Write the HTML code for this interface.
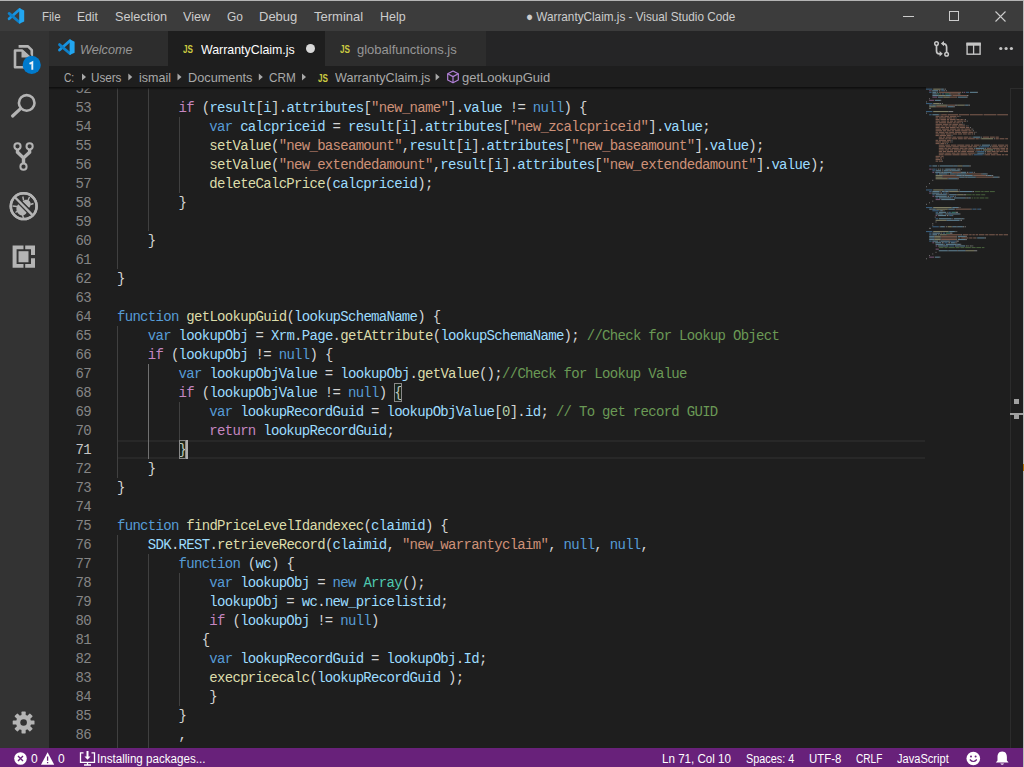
<!DOCTYPE html>
<html><head><meta charset="utf-8">
<style>
*{box-sizing:border-box}
html,body{margin:0;padding:0;width:1024px;height:767px;overflow:hidden;background:#1e1e1e;font-family:"Liberation Sans",sans-serif}
.a{position:absolute}
#topb{left:0;top:0;width:1024px;height:1px;background:#b4b4b4}
#rb{left:1023px;top:0;width:1px;height:767px;background:#bcbcbc}
#title{left:0;top:1px;width:1023px;height:30px;background:#3c3c3c}
.menu{top:2px;height:30px;line-height:30px;font-size:13px;color:#cccccc;white-space:pre}
#act{left:0;top:31px;width:49px;height:717px;background:#333333}
#tabs{left:49px;top:31px;width:974px;height:35px;background:#252526}
.tab{top:31px;height:35px;background:#2d2d2d}
.tabt{top:32px;height:35px;line-height:35px;font-size:13px;white-space:pre}
#crumb{left:49px;top:66px;width:974px;height:22px;background:#1e1e1e}
.cr{top:67px;height:22px;line-height:22px;font-size:13px;color:#a9a9a9;white-space:pre}
#shadow{left:49px;top:87px;width:877px;height:3px;background:linear-gradient(#0c0c0c,rgba(0,0,0,0))}
.ln{position:absolute;left:0px;width:42px;text-align:right;font-family:"Liberation Mono",monospace;font-size:14px;letter-spacing:-0.703px;line-height:19px;height:19px;color:#858585}
.ln.act{color:#c6c6c6}
.ig{position:absolute;width:1px;background:#404040}
.ig.ia{background:#707070}
.cl{position:absolute;white-space:pre;font-family:"Liberation Mono",monospace;font-size:14px;letter-spacing:-0.703px;line-height:19px;height:19px;color:#d4d4d4}
.k{color:#c586c0}.s{color:#569cd6}.v{color:#9cdcfe}.f{color:#dcdcaa}.t{color:#ce9178}.c{color:#6a9955}.p{color:#d4d4d4}.y{color:#4ec9b0}.n{color:#b5cea8}.b{color:#d4d4d4}
#status{left:0;top:748px;width:1023px;height:19px;background:#68217a}
.js{color:#cbcb41;font-weight:bold;font-size:11px;transform:scaleX(0.74);transform-origin:0 0}
.st{top:748px;height:19px;line-height:22px;font-size:12px;color:#ffffff;white-space:pre}
</style></head><body>
<div class="a" id="title"></div>
<div class="a" id="topb"></div>
<!-- logo -->
<svg class="a" style="left:5px;top:5px" width="22" height="22" viewBox="5 5 22 22">
<path d="M9.1 18.8 L19.5 9.5" stroke="#1793e0" stroke-width="2.8" stroke-linecap="round"/>
<path d="M9.1 13.4 L19.5 22.3" stroke="#0e80c9" stroke-width="2.8" stroke-linecap="round"/>
<path d="M19.2 8.1 L24.2 10.5 V21.5 L19.2 23.7 Z" fill="#22a6f0"/>
</svg>
<div class="a menu" style="left:42px;transform:scaleX(0.886);transform-origin:0 0">File</div>
<div class="a menu" style="left:77px;transform:scaleX(0.935);transform-origin:0 0">Edit</div>
<div class="a menu" style="left:115px;transform:scaleX(0.975);transform-origin:0 0">Selection</div>
<div class="a menu" style="left:183px;transform:scaleX(0.975);transform-origin:0 0">View</div>
<div class="a menu" style="left:227px;transform:scaleX(0.918);transform-origin:0 0">Go</div>
<div class="a menu" style="left:259px">Debug</div>
<div class="a menu" style="left:314px">Terminal</div>
<div class="a menu" style="left:380px;transform:scaleX(0.956);transform-origin:0 0">Help</div>
<div class="a menu" style="left:526px;transform:scaleX(0.903);transform-origin:0 0">● WarrantyClaim.js - Visual Studio Code</div>
<!-- window controls -->
<div class="a" style="left:903px;top:16px;width:11px;height:1px;background:#cccccc"></div>
<div class="a" style="left:949px;top:11px;width:10px;height:10px;border:1px solid #cccccc"></div>
<svg class="a" style="left:995px;top:11px" width="11" height="11" viewBox="0 0 11 11"><path d="M0.5 0.5 L10.5 10.5 M10.5 0.5 L0.5 10.5" stroke="#cccccc" stroke-width="1.1"/></svg>

<div class="a" id="act"></div>
<div class="a" id="tabs"></div>
<div class="a tab" style="left:49px;width:119px"></div>
<div class="a tab" style="left:168px;width:157px;background:#1e1e1e"></div>
<div class="a tab" style="left:325px;width:161px"></div>
<div class="a" id="crumb"></div>

<!-- activity icons -->
<svg class="a" style="left:0;top:31px" width="49" height="717" viewBox="0 31 49 717">
 <g fill="none" stroke="#b4b4b4" stroke-width="2.6" stroke-linejoin="round">
  <path d="M18.6 46.4 H28 L31.8 50.2 V58"/>
  <path d="M15 50.5 H22.6 L29.3 56.6 V67.2 H15 Z"/>
 </g>
 <path d="M21.5 50 L29.8 57.5 H21.5 Z" fill="#b4b4b4"/>
 <path d="M22.5 48.2 L31 56" stroke="#333333" stroke-width="1.2"/>
 <circle cx="31.7" cy="64.9" r="9.1" fill="#007acc"/>
 <path d="M29.5 63.9 L32.3 62.3 V69.8" fill="none" stroke="#e8f2fa" stroke-width="1.9" stroke-linejoin="miter"/>
 <!-- search -->
 <circle cx="26.7" cy="102.9" r="7.8" fill="none" stroke="#b4b4b4" stroke-width="2.6"/>
 <path d="M12.6 116 L20.6 108.6" stroke="#b4b4b4" stroke-width="3.2" stroke-linecap="round"/>
 <!-- scm -->
 <g fill="none" stroke="#b4b4b4" stroke-width="2">
  <circle cx="17.5" cy="146.3" r="3.1"/>
  <circle cx="29.6" cy="146.3" r="3.1"/>
  <circle cx="23.5" cy="166.7" r="3.1"/>
 </g>
 <path d="M17.5 149.3 V152.2 L23.5 158 L29.6 152.2 V149.3 M23.5 157 V163.6" fill="none" stroke="#b4b4b4" stroke-width="3.4"/>
 <!-- debug -->
 <circle cx="23.7" cy="206.2" r="12.9" fill="none" stroke="#b4b4b4" stroke-width="2.5"/>
 <g fill="#b4b4b4">
  <path d="M21.5 202.5 C17.5 203.5 16 207 16.5 210 C17 213.5 20 215.5 23 215.5 C25.5 215 27 213 27 211 Z"/>
  <path d="M22.5 201.5 L29 208 C31 206 31.5 203 29.5 201 C27.5 199 24.5 199.5 22.5 201.5 Z"/>
 </g>
 <g stroke="#b4b4b4" stroke-width="1.4" fill="none">
  <path d="M22.8 196.5 L23.6 200.5 M29.5 197 L28 200.5 M33.5 203.5 L30.5 204.5 M12.5 206 L17 206.5 M15.5 212.5 L17.5 211 M22.5 215 L23.5 218"/>
 </g>
 <path d="M14.2 196.5 L33.2 215.8" stroke="#333333" stroke-width="5"/>
 <path d="M14.2 196.5 L33.2 215.8" stroke="#b4b4b4" stroke-width="2.4"/>
 <circle cx="23.7" cy="206.2" r="12.9" fill="none" stroke="#b4b4b4" stroke-width="2.5"/>
 <!-- extensions -->
 <path d="M12.6 245.4 H23.5 V249.3 H16.6 V263.9 H23.5 V267.8 H12.6 Z M25.2 245.4 H35 V255 H31 V249.3 H25.2 Z M25.2 263.9 H31 V258.3 H35 V267.8 H25.2 Z" fill="#b4b4b4"/>
 <rect x="17.9" y="250.6" width="11.2" height="12.3" fill="#b4b4b4" stroke="#333333" stroke-width="1.2"/>
 <!-- gear -->
 <g transform="translate(23.6 722.5)" fill="#b4b4b4">
  <circle r="7.7"/>
  <rect x="-2.1" y="-10.9" width="4.2" height="4.5" rx="0.6" transform="rotate(0)"/><rect x="-2.1" y="-10.9" width="4.2" height="4.5" rx="0.6" transform="rotate(45)"/><rect x="-2.1" y="-10.9" width="4.2" height="4.5" rx="0.6" transform="rotate(90)"/><rect x="-2.1" y="-10.9" width="4.2" height="4.5" rx="0.6" transform="rotate(135)"/><rect x="-2.1" y="-10.9" width="4.2" height="4.5" rx="0.6" transform="rotate(180)"/><rect x="-2.1" y="-10.9" width="4.2" height="4.5" rx="0.6" transform="rotate(225)"/><rect x="-2.1" y="-10.9" width="4.2" height="4.5" rx="0.6" transform="rotate(270)"/><rect x="-2.1" y="-10.9" width="4.2" height="4.5" rx="0.6" transform="rotate(315)"/>
  <circle r="3.3" fill="#333333"/>
 </g>
</svg>
<!-- tabs content -->
<svg class="a" style="left:55px;top:36px" width="22" height="22" viewBox="4.6 4.8 22 22">
<path d="M9.1 18.8 L19.5 9.5" stroke="#1793e0" stroke-width="2.8" stroke-linecap="round"/>
<path d="M9.1 13.4 L19.5 22.3" stroke="#0e80c9" stroke-width="2.8" stroke-linecap="round"/>
<path d="M19.2 8.1 L24.2 10.5 V21.5 L19.2 23.7 Z" fill="#22a6f0"/>
</svg>
<div class="a tabt" style="left:80px;color:#969696;font-style:italic;transform:scaleX(0.975);transform-origin:0 0">Welcome</div>
<div class="a tabt js" style="left:183px">JS</div>
<div class="a tabt" style="left:201px;color:#ffffff;transform:scaleX(0.952);transform-origin:0 0">WarrantyClaim.js</div>
<div class="a" style="left:306px;top:44px;width:9px;height:9px;border-radius:50%;background:#d8d8d8"></div>
<div class="a tabt js" style="left:340px">JS</div>
<div class="a tabt" style="left:357px;color:#969696">globalfunctions.js</div>
<!-- tab actions -->
<svg class="a" style="left:930px;top:38px" width="90" height="22" viewBox="930 38 90 22">
 <g fill="none" stroke="#c5c5c5" stroke-width="1.5">
  <circle cx="936.5" cy="43.6" r="1.8"/>
  <circle cx="946.6" cy="54.2" r="1.8"/>
  <path d="M936.5 45.4 V51 Q936.5 53.8 939.3 53.8 H940.5" stroke-width="1.7"/>
  <path d="M942.5 43.6 Q946.6 43.6 946.6 47 V52.4" stroke-width="1.7"/>
 </g>
 <path d="M939.6 51.1 L942.8 53.8 L939.6 56.5 Z M944 40.9 L940.8 43.6 L944 46.3 Z" fill="#c5c5c5"/>
 <rect x="967.1" y="43.4" width="13" height="10.8" fill="none" stroke="#c5c5c5" stroke-width="1.4"/>
 <rect x="966.4" y="42.7" width="14.4" height="3" fill="#c5c5c5"/>
 <path d="M973.6 44 V54.3" stroke="#c5c5c5" stroke-width="1.3"/>
 <circle cx="1000.8" cy="48.5" r="1.6" fill="#c5c5c5"/>
 <circle cx="1006.1" cy="48.5" r="1.6" fill="#c5c5c5"/>
 <circle cx="1011.4" cy="48.5" r="1.6" fill="#c5c5c5"/>
</svg>
<!-- breadcrumbs -->
<div class="a cr" style="left:64px;transform:scaleX(0.785);transform-origin:0 0">C:</div>
<div class="a cr" style="left:91px;transform:scaleX(0.897);transform-origin:0 0">Users</div>
<div class="a cr" style="left:139px;transform:scaleX(0.961);transform-origin:0 0">ismail</div>
<div class="a cr" style="left:188px;transform:scaleX(0.979);transform-origin:0 0">Documents</div>
<div class="a cr" style="left:269px;transform:scaleX(0.903);transform-origin:0 0">CRM</div>
<div class="a cr js" style="left:318px">JS</div>
<div class="a cr" style="left:335px;transform:scaleX(0.968);transform-origin:0 0">WarrantyClaim.js</div>
<div class="a cr" style="left:462px">getLookupGuid</div>
<svg class="a" style="left:49px;top:66px" width="420" height="22" viewBox="49 66 420 22">
 <g fill="#a9a9a9">
  <path d="M82 73.5 L86 77 L82 80.5 Z"/>
  <path d="M128.3 73.5 L132.3 77 L128.3 80.5 Z"/>
  <path d="M177.5 73.5 L181.5 77 L177.5 80.5 Z"/>
  <path d="M258.8 73.5 L262.8 77 L258.8 80.5 Z"/>
  <path d="M302 73.5 L306 77 L302 80.5 Z"/>
  <path d="M435.6 73.5 L439.6 77 L435.6 80.5 Z"/>
 </g>
 <g fill="none" stroke="#b180d7" stroke-width="1.2" stroke-linejoin="round">
  <path d="M453 71 L458.3 73.8 V80 L453 82.8 L447.7 80 V73.8 Z"/>
  <path d="M447.7 73.8 L453 76.6 L458.3 73.8 M453 76.6 V82.8"/>
 </g>
</svg>

<div class="a" id="editor" style="left:49px;top:88px;width:974px;height:660px;overflow:hidden">
<div style="position:absolute;left:68px;top:352px;width:808px;height:19px;border-top:2px solid #282828;border-bottom:2px solid #282828"></div>
<div class="ln" style="top:-8px">52</div>
<div class="ln" style="top:11px">53</div>
<div class="ln" style="top:30px">54</div>
<div class="ln" style="top:49px">55</div>
<div class="ln" style="top:68px">56</div>
<div class="ln" style="top:87px">57</div>
<div class="ln" style="top:106px">58</div>
<div class="ln" style="top:125px">59</div>
<div class="ln" style="top:144px">60</div>
<div class="ln" style="top:163px">61</div>
<div class="ln" style="top:182px">62</div>
<div class="ln" style="top:201px">63</div>
<div class="ln" style="top:220px">64</div>
<div class="ln" style="top:239px">65</div>
<div class="ln" style="top:258px">66</div>
<div class="ln" style="top:277px">67</div>
<div class="ln" style="top:296px">68</div>
<div class="ln" style="top:315px">69</div>
<div class="ln" style="top:334px">70</div>
<div class="ln act" style="top:353px">71</div>
<div class="ln" style="top:372px">72</div>
<div class="ln" style="top:391px">73</div>
<div class="ln" style="top:410px">74</div>
<div class="ln" style="top:429px">75</div>
<div class="ln" style="top:448px">76</div>
<div class="ln" style="top:467px">77</div>
<div class="ln" style="top:486px">78</div>
<div class="ln" style="top:505px">79</div>
<div class="ln" style="top:524px">80</div>
<div class="ln" style="top:543px">81</div>
<div class="ln" style="top:562px">82</div>
<div class="ln" style="top:581px">83</div>
<div class="ln" style="top:600px">84</div>
<div class="ln" style="top:619px">85</div>
<div class="ln" style="top:638px">86</div>
<div class="ig" style="left:68.00px;top:-9px;height:190px"></div>
<div class="ig" style="left:98.79px;top:-9px;height:152px"></div>
<div class="ig" style="left:129.58px;top:29px;height:76px"></div>
<div class="ig" style="left:68.00px;top:238px;height:152px"></div>
<div class="ig ia" style="left:98.79px;top:276px;height:95px"></div>
<div class="ig" style="left:129.58px;top:314px;height:38px"></div>
<div class="ig" style="left:68.00px;top:447px;height:228px"></div>
<div class="ig" style="left:98.79px;top:466px;height:209px"></div>
<div class="ig" style="left:129.58px;top:485px;height:133px"></div>
<div class="cl" style="top:11px;left:129.58px"><span class="k">if</span><span class="p"> (</span><span class="v">result</span><span class="p">[</span><span class="v">i</span><span class="p">].</span><span class="v">attributes</span><span class="p">[</span><span class="t">&quot;new_name&quot;</span><span class="p">].</span><span class="v">value</span><span class="p"> != </span><span class="s">null</span><span class="p">) {</span></div>
<div class="cl" style="top:30px;left:160.36px"><span class="s">var</span><span class="p"> </span><span class="v">calcpriceid</span><span class="p"> = </span><span class="v">result</span><span class="p">[</span><span class="v">i</span><span class="p">].</span><span class="v">attributes</span><span class="p">[</span><span class="t">&quot;new_zcalcpriceid&quot;</span><span class="p">].</span><span class="v">value</span><span class="p">;</span></div>
<div class="cl" style="top:49px;left:160.36px"><span class="f">setValue</span><span class="p">(</span><span class="t">&quot;new_baseamount&quot;</span><span class="p">,</span><span class="v">result</span><span class="p">[</span><span class="v">i</span><span class="p">].</span><span class="v">attributes</span><span class="p">[</span><span class="t">&quot;new_baseamount&quot;</span><span class="p">].</span><span class="v">value</span><span class="p">);</span></div>
<div class="cl" style="top:68px;left:160.36px"><span class="f">setValue</span><span class="p">(</span><span class="t">&quot;new_extendedamount&quot;</span><span class="p">,</span><span class="v">result</span><span class="p">[</span><span class="v">i</span><span class="p">].</span><span class="v">attributes</span><span class="p">[</span><span class="t">&quot;new_extendedamount&quot;</span><span class="p">].</span><span class="v">value</span><span class="p">);</span></div>
<div class="cl" style="top:87px;left:160.36px"><span class="f">deleteCalcPrice</span><span class="p">(</span><span class="v">calcpriceid</span><span class="p">);</span></div>
<div class="cl" style="top:106px;left:129.58px"><span class="p">}</span></div>
<div class="cl" style="top:144px;left:98.79px"><span class="p">}</span></div>
<div class="cl" style="top:182px;left:68.00px"><span class="p">}</span></div>
<div class="cl" style="top:220px;left:68.00px"><span class="s">function</span><span class="p"> </span><span class="f">getLookupGuid</span><span class="p">(</span><span class="v">lookupSchemaName</span><span class="p">) {</span></div>
<div class="cl" style="top:239px;left:98.79px"><span class="s">var</span><span class="p"> </span><span class="v">lookupObj</span><span class="p"> = </span><span class="v">Xrm</span><span class="p">.</span><span class="v">Page</span><span class="p">.</span><span class="f">getAttribute</span><span class="p">(</span><span class="v">lookupSchemaName</span><span class="p">); </span><span class="c">//Check for Lookup Object</span></div>
<div class="cl" style="top:258px;left:98.79px"><span class="k">if</span><span class="p"> (</span><span class="v">lookupObj</span><span class="p"> != </span><span class="s">null</span><span class="p">) {</span></div>
<div class="cl" style="top:277px;left:129.58px"><span class="s">var</span><span class="p"> </span><span class="v">lookupObjValue</span><span class="p"> = </span><span class="v">lookupObj</span><span class="p">.</span><span class="f">getValue</span><span class="p">();</span><span class="c">//Check for Lookup Value</span></div>
<div class="cl" style="top:296px;left:129.58px"><span class="k">if</span><span class="p"> (</span><span class="v">lookupObjValue</span><span class="p"> != </span><span class="s">null</span><span class="p">) </span><span class="b">{</span></div>
<div class="cl" style="top:315px;left:160.36px"><span class="s">var</span><span class="p"> </span><span class="v">lookupRecordGuid</span><span class="p"> = </span><span class="v">lookupObjValue</span><span class="p">[</span><span class="n">0</span><span class="p">].</span><span class="v">id</span><span class="p">; </span><span class="c">// To get record GUID</span></div>
<div class="cl" style="top:334px;left:160.36px"><span class="k">return</span><span class="p"> </span><span class="v">lookupRecordGuid</span><span class="p">;</span></div>
<div class="cl" style="top:353px;left:129.58px"><span class="b">}</span></div>
<div class="cl" style="top:372px;left:98.79px"><span class="p">}</span></div>
<div class="cl" style="top:391px;left:68.00px"><span class="p">}</span></div>
<div class="cl" style="top:429px;left:68.00px"><span class="s">function</span><span class="p"> </span><span class="f">findPriceLevelIdandexec</span><span class="p">(</span><span class="v">claimid</span><span class="p">) {</span></div>
<div class="cl" style="top:448px;left:98.79px"><span class="v">SDK</span><span class="p">.</span><span class="v">REST</span><span class="p">.</span><span class="f">retrieveRecord</span><span class="p">(</span><span class="v">claimid</span><span class="p">, </span><span class="t">&quot;new_warrantyclaim&quot;</span><span class="p">, </span><span class="s">null</span><span class="p">, </span><span class="s">null</span><span class="p">,</span></div>
<div class="cl" style="top:467px;left:129.58px"><span class="s">function</span><span class="p"> (</span><span class="v">wc</span><span class="p">) {</span></div>
<div class="cl" style="top:486px;left:160.36px"><span class="s">var</span><span class="p"> </span><span class="v">lookupObj</span><span class="p"> = </span><span class="s">new</span><span class="p"> </span><span class="y">Array</span><span class="p">();</span></div>
<div class="cl" style="top:505px;left:160.36px"><span class="v">lookupObj</span><span class="p"> = </span><span class="v">wc</span><span class="p">.</span><span class="v">new_pricelistid</span><span class="p">;</span></div>
<div class="cl" style="top:524px;left:160.36px"><span class="k">if</span><span class="p"> (</span><span class="v">lookupObj</span><span class="p"> != </span><span class="s">null</span><span class="p">)</span></div>
<div class="cl" style="top:543px;left:152.67px"><span class="p">{</span></div>
<div class="cl" style="top:562px;left:160.36px"><span class="s">var</span><span class="p"> </span><span class="v">lookupRecordGuid</span><span class="p"> = </span><span class="v">lookupObj</span><span class="p">.</span><span class="v">Id</span><span class="p">;</span></div>
<div class="cl" style="top:581px;left:160.36px"><span class="f">execpricecalc</span><span class="p">(</span><span class="v">lookupRecordGuid</span><span class="p"> );</span></div>
<div class="cl" style="top:600px;left:160.36px"><span class="p">}</span></div>
<div class="cl" style="top:619px;left:129.58px"><span class="p">}</span></div>
<div class="cl" style="top:638px;left:129.58px"><span class="p">,</span></div>
<div style="position:absolute;left:345.09px;top:295px;width:7.70px;height:19px;border:1px solid #888888;background:rgba(0,100,0,0.1)"></div>
<div style="position:absolute;left:129.58px;top:352px;width:7.70px;height:19px;border:1px solid #888888;background:rgba(0,100,0,0.1)"></div>
<div style="position:absolute;left:137.27px;top:352px;width:2px;height:19px;background:#aeafad"></div>
</div>
<svg class="a" style="left:922px;top:88px" width="88" height="180" viewBox="922 88 88 180"><g opacity="0.5"><rect x="926.0" y="88.6" width="6.4" height="1.1" fill="#569cd6"/><rect x="933.2" y="88.6" width="7.2" height="1.1" fill="#dcdcaa"/><rect x="940.4" y="88.6" width="0.8" height="1.1" fill="#d4d4d4"/><rect x="941.2" y="88.6" width="2.4" height="1.1" fill="#9cdcfe"/><rect x="943.6" y="88.6" width="0.8" height="1.1" fill="#d4d4d4"/><rect x="945.2" y="88.6" width="0.8" height="1.1" fill="#d4d4d4"/><rect x="929.2" y="90.2" width="1.6" height="1.1" fill="#c586c0"/><rect x="931.6" y="90.2" width="0.8" height="1.1" fill="#d4d4d4"/><rect x="932.4" y="90.2" width="5.6" height="1.1" fill="#9cdcfe"/><rect x="938.8" y="90.2" width="1.6" height="1.1" fill="#d4d4d4"/><rect x="941.2" y="90.2" width="3.2" height="1.1" fill="#569cd6"/><rect x="944.4" y="90.2" width="0.8" height="1.1" fill="#d4d4d4"/><rect x="946.0" y="90.2" width="0.8" height="1.1" fill="#d4d4d4"/><rect x="929.2" y="91.8" width="2.4" height="1.1" fill="#569cd6"/><rect x="932.4" y="91.8" width="4.0" height="1.1" fill="#9cdcfe"/><rect x="937.2" y="91.8" width="0.8" height="1.1" fill="#d4d4d4"/><rect x="938.8" y="91.8" width="22.4" height="1.1" fill="#ce9178"/><rect x="962.0" y="91.8" width="0.8" height="1.1" fill="#d4d4d4"/><rect x="963.6" y="91.8" width="1.6" height="1.1" fill="#c586c0"/><rect x="966.0" y="91.8" width="3.2" height="1.1" fill="#569cd6"/><rect x="970.0" y="91.8" width="7.2" height="1.1" fill="#9cdcfe"/><rect x="977.2" y="91.8" width="0.8" height="1.1" fill="#d4d4d4"/><rect x="932.4" y="93.4" width="4.0" height="1.1" fill="#9cdcfe"/><rect x="936.4" y="93.4" width="0.8" height="1.1" fill="#d4d4d4"/><rect x="937.2" y="93.4" width="2.4" height="1.1" fill="#4ec9b0"/><rect x="940.4" y="93.4" width="0.8" height="1.1" fill="#d4d4d4"/><rect x="942.0" y="93.4" width="2.4" height="1.1" fill="#569cd6"/><rect x="945.2" y="93.4" width="4.0" height="1.1" fill="#4ec9b0"/><rect x="949.2" y="93.4" width="1.6" height="1.1" fill="#d4d4d4"/><rect x="950.8" y="93.4" width="7.2" height="1.1" fill="#ce9178"/><rect x="958.0" y="93.4" width="2.4" height="1.1" fill="#d4d4d4"/><rect x="932.4" y="95.0" width="5.6" height="1.1" fill="#9cdcfe"/><rect x="938.0" y="95.0" width="0.8" height="1.1" fill="#d4d4d4"/><rect x="938.8" y="95.0" width="6.4" height="1.1" fill="#dcdcaa"/><rect x="945.2" y="95.0" width="0.8" height="1.1" fill="#d4d4d4"/><rect x="946.0" y="95.0" width="4.8" height="1.1" fill="#9cdcfe"/><rect x="950.8" y="95.0" width="0.8" height="1.1" fill="#d4d4d4"/><rect x="952.4" y="95.0" width="14.4" height="1.1" fill="#ce9178"/><rect x="966.8" y="95.0" width="1.6" height="1.1" fill="#d4d4d4"/><rect x="932.4" y="96.6" width="4.8" height="1.1" fill="#c586c0"/><rect x="938.0" y="96.6" width="4.8" height="1.1" fill="#9cdcfe"/><rect x="942.8" y="96.6" width="0.8" height="1.1" fill="#d4d4d4"/><rect x="943.6" y="96.6" width="5.6" height="1.1" fill="#dcdcaa"/><rect x="949.2" y="96.6" width="0.8" height="1.1" fill="#d4d4d4"/><rect x="950.0" y="96.6" width="6.4" height="1.1" fill="#ce9178"/><rect x="956.4" y="96.6" width="0.8" height="1.1" fill="#d4d4d4"/><rect x="958.0" y="96.6" width="8.0" height="1.1" fill="#9cdcfe"/><rect x="966.0" y="96.6" width="1.6" height="1.1" fill="#d4d4d4"/><rect x="929.2" y="98.2" width="0.8" height="1.1" fill="#d4d4d4"/><rect x="929.2" y="99.8" width="4.8" height="1.1" fill="#c586c0"/><rect x="934.8" y="99.8" width="5.6" height="1.1" fill="#9cdcfe"/><rect x="940.4" y="99.8" width="0.8" height="1.1" fill="#d4d4d4"/><rect x="926.0" y="101.4" width="0.8" height="1.1" fill="#d4d4d4"/><rect x="926.0" y="103.0" width="6.4" height="1.1" fill="#569cd6"/><rect x="933.2" y="103.0" width="6.4" height="1.1" fill="#dcdcaa"/><rect x="939.6" y="103.0" width="1.6" height="1.1" fill="#d4d4d4"/><rect x="942.0" y="103.0" width="0.8" height="1.1" fill="#d4d4d4"/><rect x="929.2" y="104.6" width="2.4" height="1.1" fill="#9cdcfe"/><rect x="931.6" y="104.6" width="0.8" height="1.1" fill="#d4d4d4"/><rect x="932.4" y="104.6" width="3.2" height="1.1" fill="#9cdcfe"/><rect x="935.6" y="104.6" width="0.8" height="1.1" fill="#d4d4d4"/><rect x="936.4" y="104.6" width="9.6" height="1.1" fill="#dcdcaa"/><rect x="946.0" y="104.6" width="1.6" height="1.1" fill="#d4d4d4"/><rect x="947.6" y="104.6" width="7.2" height="1.1" fill="#ce9178"/><rect x="954.8" y="104.6" width="2.4" height="1.1" fill="#d4d4d4"/><rect x="957.2" y="104.6" width="7.2" height="1.1" fill="#dcdcaa"/><rect x="964.4" y="104.6" width="0.8" height="1.1" fill="#d4d4d4"/><rect x="965.2" y="104.6" width="3.2" height="1.1" fill="#9cdcfe"/><rect x="968.4" y="104.6" width="1.6" height="1.1" fill="#d4d4d4"/><rect x="929.2" y="106.2" width="6.4" height="1.1" fill="#dcdcaa"/><rect x="935.6" y="106.2" width="0.8" height="1.1" fill="#d4d4d4"/><rect x="936.4" y="106.2" width="9.6" height="1.1" fill="#ce9178"/><rect x="946.0" y="106.2" width="0.8" height="1.1" fill="#d4d4d4"/><rect x="947.6" y="106.2" width="5.6" height="1.1" fill="#9cdcfe"/><rect x="953.2" y="106.2" width="1.6" height="1.1" fill="#d4d4d4"/><rect x="929.2" y="107.8" width="1.6" height="1.1" fill="#d4d4d4"/><rect x="926.0" y="111.0" width="6.4" height="1.1" fill="#569cd6"/><rect x="933.2" y="111.0" width="15.2" height="1.1" fill="#dcdcaa"/><rect x="948.4" y="111.0" width="4.8" height="1.1" fill="#d4d4d4"/><rect x="926.0" y="112.6" width="0.8" height="1.1" fill="#d4d4d4"/><rect x="929.2" y="114.2" width="2.4" height="1.1" fill="#569cd6"/><rect x="932.4" y="114.2" width="6.4" height="1.1" fill="#9cdcfe"/><rect x="939.6" y="114.2" width="0.8" height="1.1" fill="#d4d4d4"/><rect x="941.2" y="114.2" width="5.6" height="1.1" fill="#ce9178"/><rect x="947.6" y="114.2" width="10.4" height="1.1" fill="#ce9178"/><rect x="958.8" y="114.2" width="10.4" height="1.1" fill="#ce9178"/><rect x="970.0" y="114.2" width="12.8" height="1.1" fill="#ce9178"/><rect x="983.6" y="114.2" width="12.8" height="1.1" fill="#ce9178"/><rect x="997.2" y="114.2" width="10.8" height="1.1" fill="#ce9178"/><rect x="935.6" y="115.8" width="4.0" height="1.1" fill="#ce9178"/><rect x="940.4" y="115.8" width="3.2" height="1.1" fill="#ce9178"/><rect x="944.4" y="115.8" width="4.8" height="1.1" fill="#ce9178"/><rect x="950.0" y="115.8" width="6.4" height="1.1" fill="#ce9178"/><rect x="957.2" y="115.8" width="1.6" height="1.1" fill="#ce9178"/><rect x="959.6" y="115.8" width="0.8" height="1.1" fill="#d4d4d4"/><rect x="935.6" y="117.4" width="2.4" height="1.1" fill="#ce9178"/><rect x="938.8" y="117.4" width="7.2" height="1.1" fill="#ce9178"/><rect x="946.8" y="117.4" width="5.6" height="1.1" fill="#ce9178"/><rect x="953.2" y="117.4" width="1.6" height="1.1" fill="#ce9178"/><rect x="955.6" y="117.4" width="0.8" height="1.1" fill="#d4d4d4"/><rect x="935.6" y="119.0" width="4.0" height="1.1" fill="#ce9178"/><rect x="940.4" y="119.0" width="5.6" height="1.1" fill="#ce9178"/><rect x="946.8" y="119.0" width="2.4" height="1.1" fill="#ce9178"/><rect x="950.0" y="119.0" width="5.6" height="1.1" fill="#ce9178"/><rect x="956.4" y="119.0" width="3.2" height="1.1" fill="#ce9178"/><rect x="960.4" y="119.0" width="2.4" height="1.1" fill="#ce9178"/><rect x="963.6" y="119.0" width="0.8" height="1.1" fill="#ce9178"/><rect x="965.2" y="119.0" width="0.8" height="1.1" fill="#d4d4d4"/><rect x="935.6" y="120.6" width="4.8" height="1.1" fill="#ce9178"/><rect x="941.2" y="120.6" width="4.8" height="1.1" fill="#ce9178"/><rect x="946.8" y="120.6" width="2.4" height="1.1" fill="#ce9178"/><rect x="950.0" y="120.6" width="3.2" height="1.1" fill="#ce9178"/><rect x="954.0" y="120.6" width="2.4" height="1.1" fill="#ce9178"/><rect x="957.2" y="120.6" width="5.6" height="1.1" fill="#ce9178"/><rect x="963.6" y="120.6" width="2.4" height="1.1" fill="#ce9178"/><rect x="966.8" y="120.6" width="0.8" height="1.1" fill="#d4d4d4"/><rect x="935.6" y="122.2" width="2.4" height="1.1" fill="#ce9178"/><rect x="938.8" y="122.2" width="7.2" height="1.1" fill="#ce9178"/><rect x="946.8" y="122.2" width="5.6" height="1.1" fill="#ce9178"/><rect x="953.2" y="122.2" width="2.4" height="1.1" fill="#ce9178"/><rect x="956.4" y="122.2" width="3.2" height="1.1" fill="#ce9178"/><rect x="960.4" y="122.2" width="0.8" height="1.1" fill="#ce9178"/><rect x="962.0" y="122.2" width="0.8" height="1.1" fill="#d4d4d4"/><rect x="935.6" y="123.8" width="6.4" height="1.1" fill="#ce9178"/><rect x="942.8" y="123.8" width="5.6" height="1.1" fill="#ce9178"/><rect x="949.2" y="123.8" width="2.4" height="1.1" fill="#ce9178"/><rect x="952.4" y="123.8" width="5.6" height="1.1" fill="#ce9178"/><rect x="958.8" y="123.8" width="4.0" height="1.1" fill="#ce9178"/><rect x="963.6" y="123.8" width="0.8" height="1.1" fill="#d4d4d4"/><rect x="935.6" y="125.4" width="4.8" height="1.1" fill="#ce9178"/><rect x="941.2" y="125.4" width="2.4" height="1.1" fill="#ce9178"/><rect x="944.4" y="125.4" width="3.2" height="1.1" fill="#ce9178"/><rect x="948.4" y="125.4" width="2.4" height="1.1" fill="#ce9178"/><rect x="951.6" y="125.4" width="5.6" height="1.1" fill="#ce9178"/><rect x="958.0" y="125.4" width="7.2" height="1.1" fill="#ce9178"/><rect x="966.0" y="125.4" width="0.8" height="1.1" fill="#ce9178"/><rect x="967.6" y="125.4" width="0.8" height="1.1" fill="#d4d4d4"/><rect x="935.6" y="127.0" width="4.0" height="1.1" fill="#ce9178"/><rect x="940.4" y="127.0" width="4.8" height="1.1" fill="#ce9178"/><rect x="946.0" y="127.0" width="3.2" height="1.1" fill="#ce9178"/><rect x="950.0" y="127.0" width="5.6" height="1.1" fill="#ce9178"/><rect x="956.4" y="127.0" width="2.4" height="1.1" fill="#ce9178"/><rect x="959.6" y="127.0" width="5.6" height="1.1" fill="#ce9178"/><rect x="966.0" y="127.0" width="3.2" height="1.1" fill="#ce9178"/><rect x="970.0" y="127.0" width="0.8" height="1.1" fill="#d4d4d4"/><rect x="935.6" y="128.6" width="5.6" height="1.1" fill="#ce9178"/><rect x="942.0" y="128.6" width="7.2" height="1.1" fill="#ce9178"/><rect x="950.0" y="128.6" width="6.4" height="1.1" fill="#ce9178"/><rect x="957.2" y="128.6" width="3.2" height="1.1" fill="#ce9178"/><rect x="961.2" y="128.6" width="2.4" height="1.1" fill="#ce9178"/><rect x="964.4" y="128.6" width="5.6" height="1.1" fill="#ce9178"/><rect x="970.8" y="128.6" width="0.8" height="1.1" fill="#ce9178"/><rect x="972.4" y="128.6" width="0.8" height="1.1" fill="#d4d4d4"/><rect x="935.6" y="130.2" width="6.4" height="1.1" fill="#ce9178"/><rect x="942.8" y="130.2" width="3.2" height="1.1" fill="#ce9178"/><rect x="946.8" y="130.2" width="4.0" height="1.1" fill="#ce9178"/><rect x="951.6" y="130.2" width="2.4" height="1.1" fill="#ce9178"/><rect x="954.8" y="130.2" width="5.6" height="1.1" fill="#ce9178"/><rect x="961.2" y="130.2" width="6.4" height="1.1" fill="#ce9178"/><rect x="968.4" y="130.2" width="2.4" height="1.1" fill="#ce9178"/><rect x="971.6" y="130.2" width="0.8" height="1.1" fill="#ce9178"/><rect x="973.2" y="130.2" width="0.8" height="1.1" fill="#d4d4d4"/><rect x="935.6" y="131.8" width="2.4" height="1.1" fill="#ce9178"/><rect x="938.8" y="131.8" width="5.6" height="1.1" fill="#ce9178"/><rect x="945.2" y="131.8" width="3.2" height="1.1" fill="#ce9178"/><rect x="949.2" y="131.8" width="4.8" height="1.1" fill="#ce9178"/><rect x="954.8" y="131.8" width="6.4" height="1.1" fill="#ce9178"/><rect x="962.0" y="131.8" width="5.6" height="1.1" fill="#ce9178"/><rect x="968.4" y="131.8" width="4.8" height="1.1" fill="#ce9178"/><rect x="974.0" y="131.8" width="0.8" height="1.1" fill="#ce9178"/><rect x="975.6" y="131.8" width="0.8" height="1.1" fill="#d4d4d4"/><rect x="935.6" y="133.4" width="4.0" height="1.1" fill="#ce9178"/><rect x="940.4" y="133.4" width="4.8" height="1.1" fill="#ce9178"/><rect x="946.0" y="133.4" width="5.6" height="1.1" fill="#ce9178"/><rect x="952.4" y="133.4" width="4.8" height="1.1" fill="#ce9178"/><rect x="958.0" y="133.4" width="4.0" height="1.1" fill="#ce9178"/><rect x="962.8" y="133.4" width="4.0" height="1.1" fill="#ce9178"/><rect x="967.6" y="133.4" width="3.2" height="1.1" fill="#ce9178"/><rect x="971.6" y="133.4" width="1.6" height="1.1" fill="#ce9178"/><rect x="974.0" y="133.4" width="0.8" height="1.1" fill="#d4d4d4"/><rect x="935.6" y="135.0" width="3.2" height="1.1" fill="#ce9178"/><rect x="939.6" y="135.0" width="6.4" height="1.1" fill="#ce9178"/><rect x="946.8" y="135.0" width="4.0" height="1.1" fill="#ce9178"/><rect x="951.6" y="135.0" width="0.8" height="1.1" fill="#d4d4d4"/><rect x="938.8" y="136.6" width="3.2" height="1.1" fill="#ce9178"/><rect x="942.8" y="136.6" width="2.4" height="1.1" fill="#ce9178"/><rect x="946.0" y="136.6" width="5.6" height="1.1" fill="#ce9178"/><rect x="952.4" y="136.6" width="4.0" height="1.1" fill="#ce9178"/><rect x="957.2" y="136.6" width="5.6" height="1.1" fill="#ce9178"/><rect x="963.6" y="136.6" width="4.8" height="1.1" fill="#ce9178"/><rect x="969.2" y="136.6" width="1.6" height="1.1" fill="#ce9178"/><rect x="971.6" y="136.6" width="0.8" height="1.1" fill="#d4d4d4"/><rect x="973.2" y="136.6" width="7.2" height="1.1" fill="#9cdcfe"/><rect x="981.2" y="136.6" width="0.8" height="1.1" fill="#d4d4d4"/><rect x="982.8" y="136.6" width="6.4" height="1.1" fill="#ce9178"/><rect x="990.0" y="136.6" width="4.8" height="1.1" fill="#ce9178"/><rect x="995.6" y="136.6" width="3.2" height="1.1" fill="#ce9178"/><rect x="938.8" y="138.2" width="5.6" height="1.1" fill="#ce9178"/><rect x="945.2" y="138.2" width="2.4" height="1.1" fill="#ce9178"/><rect x="948.4" y="138.2" width="2.4" height="1.1" fill="#ce9178"/><rect x="951.6" y="138.2" width="5.6" height="1.1" fill="#ce9178"/><rect x="958.0" y="138.2" width="4.8" height="1.1" fill="#ce9178"/><rect x="963.6" y="138.2" width="3.2" height="1.1" fill="#ce9178"/><rect x="967.6" y="138.2" width="7.2" height="1.1" fill="#ce9178"/><rect x="975.6" y="138.2" width="3.2" height="1.1" fill="#ce9178"/><rect x="979.6" y="138.2" width="0.8" height="1.1" fill="#d4d4d4"/><rect x="981.2" y="138.2" width="12.0" height="1.1" fill="#dcdcaa"/><rect x="994.0" y="138.2" width="0.8" height="1.1" fill="#d4d4d4"/><rect x="995.6" y="138.2" width="3.2" height="1.1" fill="#ce9178"/><rect x="999.6" y="138.2" width="4.8" height="1.1" fill="#ce9178"/><rect x="1005.2" y="138.2" width="2.8" height="1.1" fill="#ce9178"/><rect x="935.6" y="139.8" width="2.4" height="1.1" fill="#ce9178"/><rect x="938.8" y="139.8" width="7.2" height="1.1" fill="#ce9178"/><rect x="946.8" y="139.8" width="4.0" height="1.1" fill="#ce9178"/><rect x="951.6" y="139.8" width="0.8" height="1.1" fill="#d4d4d4"/><rect x="935.6" y="141.4" width="5.6" height="1.1" fill="#ce9178"/><rect x="942.0" y="141.4" width="7.2" height="1.1" fill="#ce9178"/><rect x="950.0" y="141.4" width="0.8" height="1.1" fill="#ce9178"/><rect x="951.6" y="141.4" width="0.8" height="1.1" fill="#d4d4d4"/><rect x="935.6" y="143.0" width="4.0" height="1.1" fill="#ce9178"/><rect x="940.4" y="143.0" width="4.0" height="1.1" fill="#ce9178"/><rect x="945.2" y="143.0" width="0.8" height="1.1" fill="#ce9178"/><rect x="946.8" y="143.0" width="0.8" height="1.1" fill="#d4d4d4"/><rect x="938.8" y="144.6" width="5.6" height="1.1" fill="#ce9178"/><rect x="945.2" y="144.6" width="4.8" height="1.1" fill="#ce9178"/><rect x="950.8" y="144.6" width="5.6" height="1.1" fill="#ce9178"/><rect x="957.2" y="144.6" width="7.2" height="1.1" fill="#ce9178"/><rect x="965.2" y="144.6" width="4.8" height="1.1" fill="#ce9178"/><rect x="970.8" y="144.6" width="2.4" height="1.1" fill="#ce9178"/><rect x="974.0" y="144.6" width="5.6" height="1.1" fill="#ce9178"/><rect x="980.4" y="144.6" width="0.8" height="1.1" fill="#d4d4d4"/><rect x="982.0" y="144.6" width="8.0" height="1.1" fill="#9cdcfe"/><rect x="990.8" y="144.6" width="0.8" height="1.1" fill="#d4d4d4"/><rect x="992.4" y="144.6" width="4.8" height="1.1" fill="#ce9178"/><rect x="998.0" y="144.6" width="6.4" height="1.1" fill="#ce9178"/><rect x="1005.2" y="144.6" width="2.8" height="1.1" fill="#ce9178"/><rect x="938.8" y="146.2" width="6.4" height="1.1" fill="#ce9178"/><rect x="946.0" y="146.2" width="5.6" height="1.1" fill="#ce9178"/><rect x="952.4" y="146.2" width="6.4" height="1.1" fill="#ce9178"/><rect x="959.6" y="146.2" width="7.2" height="1.1" fill="#ce9178"/><rect x="967.6" y="146.2" width="4.8" height="1.1" fill="#ce9178"/><rect x="973.2" y="146.2" width="4.0" height="1.1" fill="#ce9178"/><rect x="978.8" y="146.2" width="0.8" height="1.1" fill="#d4d4d4"/><rect x="980.4" y="146.2" width="8.8" height="1.1" fill="#569cd6"/><rect x="990.0" y="146.2" width="0.8" height="1.1" fill="#d4d4d4"/><rect x="991.6" y="146.2" width="6.4" height="1.1" fill="#ce9178"/><rect x="998.8" y="146.2" width="4.0" height="1.1" fill="#ce9178"/><rect x="1003.6" y="146.2" width="2.4" height="1.1" fill="#ce9178"/><rect x="1006.8" y="146.2" width="1.2" height="1.1" fill="#ce9178"/><rect x="938.8" y="147.8" width="4.8" height="1.1" fill="#ce9178"/><rect x="944.4" y="147.8" width="2.4" height="1.1" fill="#ce9178"/><rect x="947.6" y="147.8" width="3.2" height="1.1" fill="#ce9178"/><rect x="951.6" y="147.8" width="7.2" height="1.1" fill="#ce9178"/><rect x="959.6" y="147.8" width="4.0" height="1.1" fill="#ce9178"/><rect x="964.4" y="147.8" width="3.2" height="1.1" fill="#ce9178"/><rect x="968.4" y="147.8" width="4.8" height="1.1" fill="#ce9178"/><rect x="974.0" y="147.8" width="0.8" height="1.1" fill="#d4d4d4"/><rect x="975.6" y="147.8" width="8.8" height="1.1" fill="#9cdcfe"/><rect x="985.2" y="147.8" width="0.8" height="1.1" fill="#d4d4d4"/><rect x="986.8" y="147.8" width="4.8" height="1.1" fill="#ce9178"/><rect x="992.4" y="147.8" width="7.2" height="1.1" fill="#ce9178"/><rect x="1000.4" y="147.8" width="4.8" height="1.1" fill="#ce9178"/><rect x="1006.0" y="147.8" width="2.0" height="1.1" fill="#ce9178"/><rect x="938.8" y="149.4" width="5.6" height="1.1" fill="#ce9178"/><rect x="945.2" y="149.4" width="4.0" height="1.1" fill="#ce9178"/><rect x="950.0" y="149.4" width="3.2" height="1.1" fill="#ce9178"/><rect x="954.0" y="149.4" width="7.2" height="1.1" fill="#ce9178"/><rect x="962.0" y="149.4" width="4.8" height="1.1" fill="#ce9178"/><rect x="967.6" y="149.4" width="7.2" height="1.1" fill="#ce9178"/><rect x="975.6" y="149.4" width="4.8" height="1.1" fill="#ce9178"/><rect x="981.2" y="149.4" width="0.8" height="1.1" fill="#d4d4d4"/><rect x="982.8" y="149.4" width="10.4" height="1.1" fill="#dcdcaa"/><rect x="994.0" y="149.4" width="0.8" height="1.1" fill="#d4d4d4"/><rect x="995.6" y="149.4" width="4.8" height="1.1" fill="#ce9178"/><rect x="1001.2" y="149.4" width="4.0" height="1.1" fill="#ce9178"/><rect x="1006.0" y="149.4" width="2.0" height="1.1" fill="#ce9178"/><rect x="938.8" y="151.0" width="3.2" height="1.1" fill="#ce9178"/><rect x="942.8" y="151.0" width="3.2" height="1.1" fill="#ce9178"/><rect x="946.8" y="151.0" width="6.4" height="1.1" fill="#ce9178"/><rect x="954.0" y="151.0" width="3.2" height="1.1" fill="#ce9178"/><rect x="958.0" y="151.0" width="2.4" height="1.1" fill="#ce9178"/><rect x="961.2" y="151.0" width="4.8" height="1.1" fill="#ce9178"/><rect x="966.8" y="151.0" width="7.2" height="1.1" fill="#ce9178"/><rect x="975.6" y="151.0" width="0.8" height="1.1" fill="#d4d4d4"/><rect x="977.2" y="151.0" width="7.2" height="1.1" fill="#569cd6"/><rect x="985.2" y="151.0" width="0.8" height="1.1" fill="#d4d4d4"/><rect x="986.8" y="151.0" width="4.0" height="1.1" fill="#ce9178"/><rect x="991.6" y="151.0" width="4.0" height="1.1" fill="#ce9178"/><rect x="996.4" y="151.0" width="2.4" height="1.1" fill="#ce9178"/><rect x="999.6" y="151.0" width="3.2" height="1.1" fill="#ce9178"/><rect x="1003.6" y="151.0" width="4.4" height="1.1" fill="#ce9178"/><rect x="938.8" y="152.6" width="5.6" height="1.1" fill="#ce9178"/><rect x="945.2" y="152.6" width="5.6" height="1.1" fill="#ce9178"/><rect x="951.6" y="152.6" width="4.0" height="1.1" fill="#ce9178"/><rect x="956.4" y="152.6" width="3.2" height="1.1" fill="#ce9178"/><rect x="960.4" y="152.6" width="6.4" height="1.1" fill="#ce9178"/><rect x="967.6" y="152.6" width="7.2" height="1.1" fill="#ce9178"/><rect x="975.6" y="152.6" width="0.8" height="1.1" fill="#d4d4d4"/><rect x="977.2" y="152.6" width="7.2" height="1.1" fill="#9cdcfe"/><rect x="985.2" y="152.6" width="0.8" height="1.1" fill="#d4d4d4"/><rect x="986.8" y="152.6" width="5.6" height="1.1" fill="#ce9178"/><rect x="993.2" y="152.6" width="4.8" height="1.1" fill="#ce9178"/><rect x="938.8" y="154.2" width="4.8" height="1.1" fill="#ce9178"/><rect x="944.4" y="154.2" width="7.2" height="1.1" fill="#ce9178"/><rect x="952.4" y="154.2" width="7.2" height="1.1" fill="#ce9178"/><rect x="960.4" y="154.2" width="7.2" height="1.1" fill="#ce9178"/><rect x="968.4" y="154.2" width="3.2" height="1.1" fill="#ce9178"/><rect x="972.4" y="154.2" width="0.8" height="1.1" fill="#d4d4d4"/><rect x="974.0" y="154.2" width="8.8" height="1.1" fill="#569cd6"/><rect x="983.6" y="154.2" width="0.8" height="1.1" fill="#d4d4d4"/><rect x="985.2" y="154.2" width="4.8" height="1.1" fill="#ce9178"/><rect x="990.8" y="154.2" width="4.8" height="1.1" fill="#ce9178"/><rect x="996.4" y="154.2" width="4.8" height="1.1" fill="#ce9178"/><rect x="1002.0" y="154.2" width="2.4" height="1.1" fill="#ce9178"/><rect x="1005.2" y="154.2" width="2.8" height="1.1" fill="#ce9178"/><rect x="935.6" y="155.8" width="4.8" height="1.1" fill="#ce9178"/><rect x="941.2" y="155.8" width="2.4" height="1.1" fill="#ce9178"/><rect x="935.6" y="157.4" width="3.2" height="1.1" fill="#ce9178"/><rect x="939.6" y="157.4" width="2.4" height="1.1" fill="#ce9178"/><rect x="942.8" y="157.4" width="0.8" height="1.1" fill="#ce9178"/><rect x="935.6" y="159.0" width="4.8" height="1.1" fill="#ce9178"/><rect x="941.2" y="159.0" width="0.8" height="1.1" fill="#ce9178"/><rect x="935.6" y="160.6" width="2.4" height="1.1" fill="#ce9178"/><rect x="938.8" y="160.6" width="3.2" height="1.1" fill="#ce9178"/><rect x="942.0" y="160.6" width="0.8" height="1.1" fill="#d4d4d4"/><rect x="929.2" y="165.4" width="2.4" height="1.1" fill="#569cd6"/><rect x="932.4" y="165.4" width="4.8" height="1.1" fill="#9cdcfe"/><rect x="938.0" y="165.4" width="0.8" height="1.1" fill="#d4d4d4"/><rect x="939.6" y="165.4" width="13.6" height="1.1" fill="#9cdcfe"/><rect x="953.2" y="165.4" width="0.8" height="1.1" fill="#d4d4d4"/><rect x="954.0" y="165.4" width="3.2" height="1.1" fill="#9cdcfe"/><rect x="957.2" y="165.4" width="0.8" height="1.1" fill="#d4d4d4"/><rect x="958.0" y="165.4" width="4.0" height="1.1" fill="#dcdcaa"/><rect x="962.0" y="165.4" width="0.8" height="1.1" fill="#d4d4d4"/><rect x="962.8" y="165.4" width="6.4" height="1.1" fill="#9cdcfe"/><rect x="969.2" y="165.4" width="1.6" height="1.1" fill="#d4d4d4"/><rect x="929.2" y="168.6" width="2.4" height="1.1" fill="#c586c0"/><rect x="932.4" y="168.6" width="0.8" height="1.1" fill="#d4d4d4"/><rect x="933.2" y="168.6" width="2.4" height="1.1" fill="#569cd6"/><rect x="936.4" y="168.6" width="0.8" height="1.1" fill="#9cdcfe"/><rect x="938.0" y="168.6" width="0.8" height="1.1" fill="#d4d4d4"/><rect x="939.6" y="168.6" width="0.8" height="1.1" fill="#b5cea8"/><rect x="940.4" y="168.6" width="0.8" height="1.1" fill="#d4d4d4"/><rect x="942.0" y="168.6" width="0.8" height="1.1" fill="#9cdcfe"/><rect x="943.6" y="168.6" width="0.8" height="1.1" fill="#d4d4d4"/><rect x="945.2" y="168.6" width="4.8" height="1.1" fill="#9cdcfe"/><rect x="950.0" y="168.6" width="0.8" height="1.1" fill="#d4d4d4"/><rect x="950.8" y="168.6" width="4.8" height="1.1" fill="#9cdcfe"/><rect x="955.6" y="168.6" width="0.8" height="1.1" fill="#d4d4d4"/><rect x="957.2" y="168.6" width="0.8" height="1.1" fill="#9cdcfe"/><rect x="958.0" y="168.6" width="2.4" height="1.1" fill="#d4d4d4"/><rect x="961.2" y="168.6" width="0.8" height="1.1" fill="#d4d4d4"/><rect x="932.4" y="170.2" width="2.4" height="1.1" fill="#569cd6"/><rect x="935.6" y="170.2" width="5.6" height="1.1" fill="#9cdcfe"/><rect x="942.0" y="170.2" width="0.8" height="1.1" fill="#d4d4d4"/><rect x="943.6" y="170.2" width="4.8" height="1.1" fill="#9cdcfe"/><rect x="948.4" y="170.2" width="0.8" height="1.1" fill="#d4d4d4"/><rect x="949.2" y="170.2" width="0.8" height="1.1" fill="#9cdcfe"/><rect x="950.0" y="170.2" width="1.6" height="1.1" fill="#d4d4d4"/><rect x="951.6" y="170.2" width="8.0" height="1.1" fill="#9cdcfe"/><rect x="959.6" y="170.2" width="0.8" height="1.1" fill="#d4d4d4"/><rect x="932.4" y="171.8" width="1.6" height="1.1" fill="#c586c0"/><rect x="934.8" y="171.8" width="0.8" height="1.1" fill="#d4d4d4"/><rect x="935.6" y="171.8" width="4.8" height="1.1" fill="#9cdcfe"/><rect x="940.4" y="171.8" width="0.8" height="1.1" fill="#d4d4d4"/><rect x="941.2" y="171.8" width="0.8" height="1.1" fill="#9cdcfe"/><rect x="942.0" y="171.8" width="1.6" height="1.1" fill="#d4d4d4"/><rect x="943.6" y="171.8" width="8.0" height="1.1" fill="#9cdcfe"/><rect x="951.6" y="171.8" width="0.8" height="1.1" fill="#d4d4d4"/><rect x="952.4" y="171.8" width="8.0" height="1.1" fill="#ce9178"/><rect x="960.4" y="171.8" width="1.6" height="1.1" fill="#d4d4d4"/><rect x="962.0" y="171.8" width="4.0" height="1.1" fill="#9cdcfe"/><rect x="966.8" y="171.8" width="1.6" height="1.1" fill="#d4d4d4"/><rect x="969.2" y="171.8" width="3.2" height="1.1" fill="#569cd6"/><rect x="972.4" y="171.8" width="0.8" height="1.1" fill="#d4d4d4"/><rect x="974.0" y="171.8" width="0.8" height="1.1" fill="#d4d4d4"/><rect x="935.6" y="173.4" width="2.4" height="1.1" fill="#569cd6"/><rect x="938.8" y="173.4" width="8.8" height="1.1" fill="#9cdcfe"/><rect x="948.4" y="173.4" width="0.8" height="1.1" fill="#d4d4d4"/><rect x="950.0" y="173.4" width="4.8" height="1.1" fill="#9cdcfe"/><rect x="954.8" y="173.4" width="0.8" height="1.1" fill="#d4d4d4"/><rect x="955.6" y="173.4" width="0.8" height="1.1" fill="#9cdcfe"/><rect x="956.4" y="173.4" width="1.6" height="1.1" fill="#d4d4d4"/><rect x="958.0" y="173.4" width="8.0" height="1.1" fill="#9cdcfe"/><rect x="966.0" y="173.4" width="0.8" height="1.1" fill="#d4d4d4"/><rect x="966.8" y="173.4" width="14.4" height="1.1" fill="#ce9178"/><rect x="981.2" y="173.4" width="1.6" height="1.1" fill="#d4d4d4"/><rect x="982.8" y="173.4" width="4.0" height="1.1" fill="#9cdcfe"/><rect x="986.8" y="173.4" width="0.8" height="1.1" fill="#d4d4d4"/><rect x="935.6" y="175.0" width="6.4" height="1.1" fill="#dcdcaa"/><rect x="942.0" y="175.0" width="0.8" height="1.1" fill="#d4d4d4"/><rect x="942.8" y="175.0" width="12.8" height="1.1" fill="#ce9178"/><rect x="955.6" y="175.0" width="0.8" height="1.1" fill="#d4d4d4"/><rect x="956.4" y="175.0" width="4.8" height="1.1" fill="#9cdcfe"/><rect x="961.2" y="175.0" width="0.8" height="1.1" fill="#d4d4d4"/><rect x="962.0" y="175.0" width="0.8" height="1.1" fill="#9cdcfe"/><rect x="962.8" y="175.0" width="1.6" height="1.1" fill="#d4d4d4"/><rect x="964.4" y="175.0" width="8.0" height="1.1" fill="#9cdcfe"/><rect x="972.4" y="175.0" width="0.8" height="1.1" fill="#d4d4d4"/><rect x="973.2" y="175.0" width="12.8" height="1.1" fill="#ce9178"/><rect x="986.0" y="175.0" width="1.6" height="1.1" fill="#d4d4d4"/><rect x="987.6" y="175.0" width="4.0" height="1.1" fill="#9cdcfe"/><rect x="991.6" y="175.0" width="1.6" height="1.1" fill="#d4d4d4"/><rect x="935.6" y="176.6" width="6.4" height="1.1" fill="#dcdcaa"/><rect x="942.0" y="176.6" width="0.8" height="1.1" fill="#d4d4d4"/><rect x="942.8" y="176.6" width="16.0" height="1.1" fill="#ce9178"/><rect x="958.8" y="176.6" width="0.8" height="1.1" fill="#d4d4d4"/><rect x="959.6" y="176.6" width="4.8" height="1.1" fill="#9cdcfe"/><rect x="964.4" y="176.6" width="0.8" height="1.1" fill="#d4d4d4"/><rect x="965.2" y="176.6" width="0.8" height="1.1" fill="#9cdcfe"/><rect x="966.0" y="176.6" width="1.6" height="1.1" fill="#d4d4d4"/><rect x="967.6" y="176.6" width="8.0" height="1.1" fill="#9cdcfe"/><rect x="975.6" y="176.6" width="0.8" height="1.1" fill="#d4d4d4"/><rect x="976.4" y="176.6" width="16.0" height="1.1" fill="#ce9178"/><rect x="992.4" y="176.6" width="1.6" height="1.1" fill="#d4d4d4"/><rect x="994.0" y="176.6" width="4.0" height="1.1" fill="#9cdcfe"/><rect x="998.0" y="176.6" width="1.6" height="1.1" fill="#d4d4d4"/><rect x="935.6" y="178.2" width="12.0" height="1.1" fill="#dcdcaa"/><rect x="947.6" y="178.2" width="0.8" height="1.1" fill="#d4d4d4"/><rect x="948.4" y="178.2" width="8.8" height="1.1" fill="#9cdcfe"/><rect x="957.2" y="178.2" width="1.6" height="1.1" fill="#d4d4d4"/><rect x="932.4" y="179.8" width="0.8" height="1.1" fill="#d4d4d4"/><rect x="929.2" y="183.0" width="0.8" height="1.1" fill="#d4d4d4"/><rect x="926.0" y="186.2" width="0.8" height="1.1" fill="#d4d4d4"/><rect x="926.0" y="189.4" width="6.4" height="1.1" fill="#569cd6"/><rect x="933.2" y="189.4" width="10.4" height="1.1" fill="#dcdcaa"/><rect x="943.6" y="189.4" width="0.8" height="1.1" fill="#d4d4d4"/><rect x="944.4" y="189.4" width="12.8" height="1.1" fill="#9cdcfe"/><rect x="957.2" y="189.4" width="0.8" height="1.1" fill="#d4d4d4"/><rect x="958.8" y="189.4" width="0.8" height="1.1" fill="#d4d4d4"/><rect x="929.2" y="191.0" width="2.4" height="1.1" fill="#569cd6"/><rect x="932.4" y="191.0" width="7.2" height="1.1" fill="#9cdcfe"/><rect x="940.4" y="191.0" width="0.8" height="1.1" fill="#d4d4d4"/><rect x="942.0" y="191.0" width="2.4" height="1.1" fill="#9cdcfe"/><rect x="944.4" y="191.0" width="0.8" height="1.1" fill="#d4d4d4"/><rect x="945.2" y="191.0" width="3.2" height="1.1" fill="#9cdcfe"/><rect x="948.4" y="191.0" width="0.8" height="1.1" fill="#d4d4d4"/><rect x="949.2" y="191.0" width="9.6" height="1.1" fill="#dcdcaa"/><rect x="958.8" y="191.0" width="0.8" height="1.1" fill="#d4d4d4"/><rect x="959.6" y="191.0" width="12.8" height="1.1" fill="#9cdcfe"/><rect x="972.4" y="191.0" width="1.6" height="1.1" fill="#d4d4d4"/><rect x="974.8" y="191.0" width="5.6" height="1.1" fill="#6a9955"/><rect x="981.2" y="191.0" width="2.4" height="1.1" fill="#6a9955"/><rect x="984.4" y="191.0" width="4.8" height="1.1" fill="#6a9955"/><rect x="990.0" y="191.0" width="4.8" height="1.1" fill="#6a9955"/><rect x="929.2" y="192.6" width="1.6" height="1.1" fill="#c586c0"/><rect x="931.6" y="192.6" width="0.8" height="1.1" fill="#d4d4d4"/><rect x="932.4" y="192.6" width="7.2" height="1.1" fill="#9cdcfe"/><rect x="940.4" y="192.6" width="1.6" height="1.1" fill="#d4d4d4"/><rect x="942.8" y="192.6" width="3.2" height="1.1" fill="#569cd6"/><rect x="946.0" y="192.6" width="0.8" height="1.1" fill="#d4d4d4"/><rect x="947.6" y="192.6" width="0.8" height="1.1" fill="#d4d4d4"/><rect x="932.4" y="194.2" width="2.4" height="1.1" fill="#569cd6"/><rect x="935.6" y="194.2" width="11.2" height="1.1" fill="#9cdcfe"/><rect x="947.6" y="194.2" width="0.8" height="1.1" fill="#d4d4d4"/><rect x="949.2" y="194.2" width="7.2" height="1.1" fill="#9cdcfe"/><rect x="956.4" y="194.2" width="0.8" height="1.1" fill="#d4d4d4"/><rect x="957.2" y="194.2" width="6.4" height="1.1" fill="#dcdcaa"/><rect x="963.6" y="194.2" width="2.4" height="1.1" fill="#d4d4d4"/><rect x="966.0" y="194.2" width="5.6" height="1.1" fill="#6a9955"/><rect x="972.4" y="194.2" width="2.4" height="1.1" fill="#6a9955"/><rect x="975.6" y="194.2" width="4.8" height="1.1" fill="#6a9955"/><rect x="981.2" y="194.2" width="4.0" height="1.1" fill="#6a9955"/><rect x="932.4" y="195.8" width="1.6" height="1.1" fill="#c586c0"/><rect x="934.8" y="195.8" width="0.8" height="1.1" fill="#d4d4d4"/><rect x="935.6" y="195.8" width="11.2" height="1.1" fill="#9cdcfe"/><rect x="947.6" y="195.8" width="1.6" height="1.1" fill="#d4d4d4"/><rect x="950.0" y="195.8" width="3.2" height="1.1" fill="#569cd6"/><rect x="953.2" y="195.8" width="0.8" height="1.1" fill="#d4d4d4"/><rect x="954.8" y="195.8" width="0.8" height="1.1" fill="#d4d4d4"/><rect x="935.6" y="197.4" width="2.4" height="1.1" fill="#569cd6"/><rect x="938.8" y="197.4" width="12.8" height="1.1" fill="#9cdcfe"/><rect x="952.4" y="197.4" width="0.8" height="1.1" fill="#d4d4d4"/><rect x="954.0" y="197.4" width="11.2" height="1.1" fill="#9cdcfe"/><rect x="965.2" y="197.4" width="0.8" height="1.1" fill="#d4d4d4"/><rect x="966.0" y="197.4" width="0.8" height="1.1" fill="#b5cea8"/><rect x="966.8" y="197.4" width="1.6" height="1.1" fill="#d4d4d4"/><rect x="968.4" y="197.4" width="1.6" height="1.1" fill="#9cdcfe"/><rect x="970.0" y="197.4" width="0.8" height="1.1" fill="#d4d4d4"/><rect x="971.6" y="197.4" width="1.6" height="1.1" fill="#6a9955"/><rect x="974.0" y="197.4" width="1.6" height="1.1" fill="#6a9955"/><rect x="976.4" y="197.4" width="2.4" height="1.1" fill="#6a9955"/><rect x="979.6" y="197.4" width="4.8" height="1.1" fill="#6a9955"/><rect x="985.2" y="197.4" width="3.2" height="1.1" fill="#6a9955"/><rect x="935.6" y="199.0" width="4.8" height="1.1" fill="#c586c0"/><rect x="941.2" y="199.0" width="12.8" height="1.1" fill="#9cdcfe"/><rect x="954.0" y="199.0" width="0.8" height="1.1" fill="#d4d4d4"/><rect x="932.4" y="200.6" width="0.8" height="1.1" fill="#d4d4d4"/><rect x="929.2" y="202.2" width="0.8" height="1.1" fill="#d4d4d4"/><rect x="926.0" y="203.8" width="0.8" height="1.1" fill="#d4d4d4"/><rect x="926.0" y="207.0" width="6.4" height="1.1" fill="#569cd6"/><rect x="933.2" y="207.0" width="18.4" height="1.1" fill="#dcdcaa"/><rect x="951.6" y="207.0" width="0.8" height="1.1" fill="#d4d4d4"/><rect x="952.4" y="207.0" width="5.6" height="1.1" fill="#9cdcfe"/><rect x="958.0" y="207.0" width="0.8" height="1.1" fill="#d4d4d4"/><rect x="959.6" y="207.0" width="0.8" height="1.1" fill="#d4d4d4"/><rect x="929.2" y="208.6" width="2.4" height="1.1" fill="#9cdcfe"/><rect x="931.6" y="208.6" width="0.8" height="1.1" fill="#d4d4d4"/><rect x="932.4" y="208.6" width="3.2" height="1.1" fill="#9cdcfe"/><rect x="935.6" y="208.6" width="0.8" height="1.1" fill="#d4d4d4"/><rect x="936.4" y="208.6" width="11.2" height="1.1" fill="#dcdcaa"/><rect x="947.6" y="208.6" width="0.8" height="1.1" fill="#d4d4d4"/><rect x="948.4" y="208.6" width="5.6" height="1.1" fill="#9cdcfe"/><rect x="954.0" y="208.6" width="0.8" height="1.1" fill="#d4d4d4"/><rect x="955.6" y="208.6" width="15.2" height="1.1" fill="#ce9178"/><rect x="970.8" y="208.6" width="0.8" height="1.1" fill="#d4d4d4"/><rect x="972.4" y="208.6" width="3.2" height="1.1" fill="#569cd6"/><rect x="975.6" y="208.6" width="0.8" height="1.1" fill="#d4d4d4"/><rect x="977.2" y="208.6" width="3.2" height="1.1" fill="#569cd6"/><rect x="980.4" y="208.6" width="0.8" height="1.1" fill="#d4d4d4"/><rect x="932.4" y="210.2" width="6.4" height="1.1" fill="#569cd6"/><rect x="939.6" y="210.2" width="0.8" height="1.1" fill="#d4d4d4"/><rect x="940.4" y="210.2" width="1.6" height="1.1" fill="#9cdcfe"/><rect x="942.0" y="210.2" width="0.8" height="1.1" fill="#d4d4d4"/><rect x="943.6" y="210.2" width="0.8" height="1.1" fill="#d4d4d4"/><rect x="935.6" y="211.8" width="2.4" height="1.1" fill="#569cd6"/><rect x="938.8" y="211.8" width="7.2" height="1.1" fill="#9cdcfe"/><rect x="946.8" y="211.8" width="0.8" height="1.1" fill="#d4d4d4"/><rect x="948.4" y="211.8" width="2.4" height="1.1" fill="#569cd6"/><rect x="951.6" y="211.8" width="4.0" height="1.1" fill="#4ec9b0"/><rect x="955.6" y="211.8" width="2.4" height="1.1" fill="#d4d4d4"/><rect x="935.6" y="213.4" width="7.2" height="1.1" fill="#9cdcfe"/><rect x="943.6" y="213.4" width="0.8" height="1.1" fill="#d4d4d4"/><rect x="945.2" y="213.4" width="1.6" height="1.1" fill="#9cdcfe"/><rect x="946.8" y="213.4" width="0.8" height="1.1" fill="#d4d4d4"/><rect x="947.6" y="213.4" width="12.0" height="1.1" fill="#9cdcfe"/><rect x="959.6" y="213.4" width="0.8" height="1.1" fill="#d4d4d4"/><rect x="935.6" y="215.0" width="1.6" height="1.1" fill="#c586c0"/><rect x="938.0" y="215.0" width="0.8" height="1.1" fill="#d4d4d4"/><rect x="938.8" y="215.0" width="7.2" height="1.1" fill="#9cdcfe"/><rect x="946.8" y="215.0" width="1.6" height="1.1" fill="#d4d4d4"/><rect x="949.2" y="215.0" width="3.2" height="1.1" fill="#569cd6"/><rect x="952.4" y="215.0" width="0.8" height="1.1" fill="#d4d4d4"/><rect x="934.8" y="216.6" width="0.8" height="1.1" fill="#d4d4d4"/><rect x="935.6" y="218.2" width="2.4" height="1.1" fill="#569cd6"/><rect x="938.8" y="218.2" width="12.8" height="1.1" fill="#9cdcfe"/><rect x="952.4" y="218.2" width="0.8" height="1.1" fill="#d4d4d4"/><rect x="954.0" y="218.2" width="7.2" height="1.1" fill="#9cdcfe"/><rect x="961.2" y="218.2" width="0.8" height="1.1" fill="#d4d4d4"/><rect x="962.0" y="218.2" width="1.6" height="1.1" fill="#9cdcfe"/><rect x="963.6" y="218.2" width="0.8" height="1.1" fill="#d4d4d4"/><rect x="935.6" y="219.8" width="10.4" height="1.1" fill="#dcdcaa"/><rect x="946.0" y="219.8" width="0.8" height="1.1" fill="#d4d4d4"/><rect x="946.8" y="219.8" width="12.8" height="1.1" fill="#9cdcfe"/><rect x="960.4" y="219.8" width="1.6" height="1.1" fill="#d4d4d4"/><rect x="935.6" y="221.4" width="0.8" height="1.1" fill="#d4d4d4"/><rect x="932.4" y="223.0" width="0.8" height="1.1" fill="#d4d4d4"/><rect x="932.4" y="224.6" width="0.8" height="1.1" fill="#d4d4d4"/><rect x="932.4" y="226.2" width="6.4" height="1.1" fill="#569cd6"/><rect x="939.6" y="226.2" width="0.8" height="1.1" fill="#d4d4d4"/><rect x="940.4" y="226.2" width="4.0" height="1.1" fill="#9cdcfe"/><rect x="944.4" y="226.2" width="0.8" height="1.1" fill="#d4d4d4"/><rect x="946.0" y="226.2" width="0.8" height="1.1" fill="#d4d4d4"/><rect x="947.6" y="226.2" width="4.0" height="1.1" fill="#dcdcaa"/><rect x="951.6" y="226.2" width="0.8" height="1.1" fill="#d4d4d4"/><rect x="952.4" y="226.2" width="4.0" height="1.1" fill="#9cdcfe"/><rect x="956.4" y="226.2" width="0.8" height="1.1" fill="#d4d4d4"/><rect x="957.2" y="226.2" width="5.6" height="1.1" fill="#9cdcfe"/><rect x="962.8" y="226.2" width="1.6" height="1.1" fill="#d4d4d4"/><rect x="965.2" y="226.2" width="0.8" height="1.1" fill="#d4d4d4"/><rect x="929.2" y="227.8" width="1.6" height="1.1" fill="#d4d4d4"/><rect x="926.0" y="231.0" width="6.4" height="1.1" fill="#569cd6"/><rect x="933.2" y="231.0" width="15.2" height="1.1" fill="#dcdcaa"/><rect x="948.4" y="231.0" width="0.8" height="1.1" fill="#d4d4d4"/><rect x="949.2" y="231.0" width="5.6" height="1.1" fill="#9cdcfe"/><rect x="954.8" y="231.0" width="0.8" height="1.1" fill="#d4d4d4"/><rect x="956.4" y="231.0" width="0.8" height="1.1" fill="#d4d4d4"/><rect x="929.2" y="232.6" width="2.4" height="1.1" fill="#569cd6"/><rect x="932.4" y="232.6" width="8.0" height="1.1" fill="#9cdcfe"/><rect x="941.2" y="232.6" width="0.8" height="1.1" fill="#d4d4d4"/><rect x="942.8" y="232.6" width="2.4" height="1.1" fill="#569cd6"/><rect x="946.0" y="232.6" width="4.0" height="1.1" fill="#4ec9b0"/><rect x="950.0" y="232.6" width="2.4" height="1.1" fill="#d4d4d4"/><rect x="929.2" y="234.2" width="2.4" height="1.1" fill="#569cd6"/><rect x="932.4" y="234.2" width="4.8" height="1.1" fill="#9cdcfe"/><rect x="938.0" y="234.2" width="0.8" height="1.1" fill="#d4d4d4"/><rect x="939.6" y="234.2" width="6.4" height="1.1" fill="#dcdcaa"/><rect x="946.0" y="234.2" width="0.8" height="1.1" fill="#d4d4d4"/><rect x="946.8" y="234.2" width="14.4" height="1.1" fill="#ce9178"/><rect x="961.2" y="234.2" width="0.8" height="1.1" fill="#d4d4d4"/><rect x="962.8" y="234.2" width="5.6" height="1.1" fill="#ce9178"/><rect x="969.2" y="234.2" width="2.4" height="1.1" fill="#ce9178"/><rect x="972.4" y="234.2" width="2.4" height="1.1" fill="#ce9178"/><rect x="975.6" y="234.2" width="2.4" height="1.1" fill="#ce9178"/><rect x="978.8" y="234.2" width="5.6" height="1.1" fill="#ce9178"/><rect x="985.2" y="234.2" width="3.2" height="1.1" fill="#ce9178"/><rect x="989.2" y="234.2" width="5.6" height="1.1" fill="#ce9178"/><rect x="995.6" y="234.2" width="2.4" height="1.1" fill="#ce9178"/><rect x="998.8" y="234.2" width="4.0" height="1.1" fill="#ce9178"/><rect x="1003.6" y="234.2" width="4.4" height="1.1" fill="#ce9178"/><rect x="929.2" y="235.8" width="4.8" height="1.1" fill="#9cdcfe"/><rect x="934.0" y="235.8" width="0.8" height="1.1" fill="#d4d4d4"/><rect x="934.8" y="235.8" width="5.6" height="1.1" fill="#dcdcaa"/><rect x="940.4" y="235.8" width="0.8" height="1.1" fill="#d4d4d4"/><rect x="941.2" y="235.8" width="15.2" height="1.1" fill="#ce9178"/><rect x="956.4" y="235.8" width="0.8" height="1.1" fill="#d4d4d4"/><rect x="958.0" y="235.8" width="7.2" height="1.1" fill="#9cdcfe"/><rect x="965.2" y="235.8" width="1.6" height="1.1" fill="#d4d4d4"/><rect x="929.2" y="237.4" width="4.8" height="1.1" fill="#9cdcfe"/><rect x="934.0" y="237.4" width="0.8" height="1.1" fill="#d4d4d4"/><rect x="934.8" y="237.4" width="5.6" height="1.1" fill="#dcdcaa"/><rect x="940.4" y="237.4" width="0.8" height="1.1" fill="#d4d4d4"/><rect x="941.2" y="237.4" width="15.2" height="1.1" fill="#ce9178"/><rect x="956.4" y="237.4" width="0.8" height="1.1" fill="#d4d4d4"/><rect x="958.0" y="237.4" width="2.4" height="1.1" fill="#ce9178"/><rect x="961.2" y="237.4" width="7.2" height="1.1" fill="#ce9178"/><rect x="969.2" y="237.4" width="3.2" height="1.1" fill="#ce9178"/><rect x="973.2" y="237.4" width="2.4" height="1.1" fill="#ce9178"/><rect x="975.6" y="237.4" width="0.8" height="1.1" fill="#d4d4d4"/><rect x="977.2" y="237.4" width="7.2" height="1.1" fill="#9cdcfe"/><rect x="984.4" y="237.4" width="1.6" height="1.1" fill="#d4d4d4"/><rect x="929.2" y="239.0" width="4.8" height="1.1" fill="#9cdcfe"/><rect x="934.0" y="239.0" width="0.8" height="1.1" fill="#d4d4d4"/><rect x="934.8" y="239.0" width="5.6" height="1.1" fill="#dcdcaa"/><rect x="940.4" y="239.0" width="0.8" height="1.1" fill="#d4d4d4"/><rect x="941.2" y="239.0" width="15.2" height="1.1" fill="#ce9178"/><rect x="956.4" y="239.0" width="0.8" height="1.1" fill="#d4d4d4"/><rect x="958.0" y="239.0" width="7.2" height="1.1" fill="#9cdcfe"/><rect x="965.2" y="239.0" width="1.6" height="1.1" fill="#d4d4d4"/><rect x="929.2" y="240.6" width="2.4" height="1.1" fill="#569cd6"/><rect x="932.4" y="240.6" width="5.6" height="1.1" fill="#9cdcfe"/><rect x="938.8" y="240.6" width="0.8" height="1.1" fill="#d4d4d4"/><rect x="940.4" y="240.6" width="8.8" height="1.1" fill="#9cdcfe"/><rect x="949.2" y="240.6" width="0.8" height="1.1" fill="#d4d4d4"/><rect x="950.0" y="240.6" width="6.4" height="1.1" fill="#569cd6"/><rect x="956.4" y="240.6" width="2.4" height="1.1" fill="#d4d4d4"/><rect x="932.4" y="242.2" width="1.6" height="1.1" fill="#c586c0"/><rect x="934.8" y="242.2" width="0.8" height="1.1" fill="#d4d4d4"/><rect x="935.6" y="242.2" width="5.6" height="1.1" fill="#9cdcfe"/><rect x="942.0" y="242.2" width="1.6" height="1.1" fill="#d4d4d4"/><rect x="944.4" y="242.2" width="3.2" height="1.1" fill="#569cd6"/><rect x="948.4" y="242.2" width="1.6" height="1.1" fill="#d4d4d4"/><rect x="950.8" y="242.2" width="4.0" height="1.1" fill="#9cdcfe"/><rect x="954.8" y="242.2" width="0.8" height="1.1" fill="#d4d4d4"/><rect x="956.4" y="242.2" width="0.8" height="1.1" fill="#d4d4d4"/><rect x="935.6" y="243.8" width="8.0" height="1.1" fill="#9cdcfe"/><rect x="944.4" y="243.8" width="0.8" height="1.1" fill="#d4d4d4"/><rect x="946.0" y="243.8" width="10.4" height="1.1" fill="#9cdcfe"/><rect x="956.4" y="243.8" width="0.8" height="1.1" fill="#d4d4d4"/><rect x="957.2" y="243.8" width="3.2" height="1.1" fill="#9cdcfe"/><rect x="960.4" y="243.8" width="0.8" height="1.1" fill="#d4d4d4"/><rect x="935.6" y="245.4" width="1.6" height="1.1" fill="#c586c0"/><rect x="938.0" y="245.4" width="0.8" height="1.1" fill="#d4d4d4"/><rect x="938.8" y="245.4" width="9.6" height="1.1" fill="#9cdcfe"/><rect x="949.2" y="245.4" width="4.8" height="1.1" fill="#569cd6"/><rect x="954.8" y="245.4" width="4.0" height="1.1" fill="#9cdcfe"/><rect x="958.8" y="245.4" width="0.8" height="1.1" fill="#d4d4d4"/><rect x="959.6" y="245.4" width="5.6" height="1.1" fill="#9cdcfe"/><rect x="966.0" y="245.4" width="1.6" height="1.1" fill="#b5cea8"/><rect x="968.4" y="245.4" width="0.8" height="1.1" fill="#d4d4d4"/><rect x="970.0" y="245.4" width="0.8" height="1.1" fill="#b5cea8"/><rect x="970.8" y="245.4" width="0.8" height="1.1" fill="#d4d4d4"/><rect x="972.4" y="245.4" width="0.8" height="1.1" fill="#d4d4d4"/><rect x="938.8" y="247.0" width="4.8" height="1.1" fill="#6a9955"/><rect x="944.4" y="247.0" width="3.2" height="1.1" fill="#6a9955"/><rect x="948.4" y="247.0" width="6.4" height="1.1" fill="#6a9955"/><rect x="955.6" y="247.0" width="4.0" height="1.1" fill="#6a9955"/><rect x="960.4" y="247.0" width="4.0" height="1.1" fill="#6a9955"/><rect x="965.2" y="247.0" width="5.6" height="1.1" fill="#6a9955"/><rect x="971.6" y="247.0" width="4.0" height="1.1" fill="#6a9955"/><rect x="976.4" y="247.0" width="4.8" height="1.1" fill="#6a9955"/><rect x="982.0" y="247.0" width="2.4" height="1.1" fill="#6a9955"/><rect x="935.6" y="248.6" width="3.2" height="1.1" fill="#c586c0"/><rect x="938.8" y="250.2" width="8.8" height="1.1" fill="#9cdcfe"/><rect x="947.6" y="250.2" width="0.8" height="1.1" fill="#d4d4d4"/><rect x="948.4" y="250.2" width="8.8" height="1.1" fill="#9cdcfe"/><rect x="957.2" y="250.2" width="0.8" height="1.1" fill="#d4d4d4"/><rect x="958.0" y="250.2" width="7.2" height="1.1" fill="#9cdcfe"/><rect x="965.2" y="250.2" width="0.8" height="1.1" fill="#d4d4d4"/><rect x="966.0" y="250.2" width="8.0" height="1.1" fill="#dcdcaa"/><rect x="974.0" y="250.2" width="3.2" height="1.1" fill="#d4d4d4"/><rect x="935.6" y="251.8" width="0.8" height="1.1" fill="#d4d4d4"/><rect x="932.4" y="253.4" width="0.8" height="1.1" fill="#d4d4d4"/><rect x="929.2" y="255.0" width="0.8" height="1.1" fill="#d4d4d4"/><rect x="929.2" y="256.6" width="4.8" height="1.1" fill="#c586c0"/><rect x="934.8" y="256.6" width="4.8" height="1.1" fill="#9cdcfe"/><rect x="939.6" y="256.6" width="0.8" height="1.1" fill="#d4d4d4"/><rect x="926.0" y="258.2" width="0.8" height="1.1" fill="#d4d4d4"/></g></svg>
<div class="a" id="shadow"></div>

<div class="a" style="left:1010px;top:88px;width:1px;height:660px;background:#2c2c2c"></div>
<div class="a" style="left:1010px;top:88px;width:13px;height:1px;background:#2c2c2c"></div>
<div class="a" style="left:1014px;top:399px;width:5px;height:5px;background:#a0a0a0"></div>
<div class="a" style="left:1014px;top:414px;width:5px;height:5px;background:#a0a0a0"></div>
<div class="a" style="left:1010px;top:413px;width:13px;height:2px;background:#a0a0a0"></div>
<div class="a" id="rb"></div>
<div class="a" style="left:1023px;top:464px;width:1px;height:7px;background:#b5770f"></div>
<div class="a" id="status"></div>

<svg class="a" style="left:0;top:748px" width="1023" height="19" viewBox="0 748 1023 19">
 <circle cx="20.5" cy="758.5" r="6.3" fill="#ffffff"/>
 <path d="M18 756 L23 761 M23 756 L18 761" stroke="#68217a" stroke-width="1.4"/>
 <path d="M47.6 752.3 L54.2 764.7 H41 Z" fill="#ffffff"/>
 <path d="M47.6 756.5 V760.8 M47.6 762 V763.3" stroke="#68217a" stroke-width="1.3"/>
 <g fill="none" stroke="#ffffff" stroke-width="1.3">
  <path d="M83.5 752.8 H80.5 V762.3 H94.5 V752.8 H91.5"/>
 </g>
 <path d="M87.5 751 V758" stroke="#ffffff" stroke-width="2"/>
 <path d="M84.5 756.5 L87.5 759.8 L90.5 756.5 Z" fill="#ffffff"/>
 <path d="M87.5 762.3 V764.5 M84 765 H91" stroke="#ffffff" stroke-width="1.3"/>
 <!-- smiley -->
 <circle cx="973.3" cy="758.5" r="6.8" fill="#ffffff"/>
 <circle cx="971" cy="756.5" r="1" fill="#68217a"/>
 <circle cx="975.6" cy="756.5" r="1" fill="#68217a"/>
 <path d="M969.8 759.5 Q973.3 763.5 976.8 759.5" fill="none" stroke="#68217a" stroke-width="1.2"/>
 <!-- bell -->
 <path d="M1002.2 751.5 C998.5 751.5 997.5 754.5 997.5 757 V760.5 L995.8 762.5 H1008.6 L1006.9 760.5 V757 C1006.9 754.5 1005.9 751.5 1002.2 751.5 Z" fill="#ffffff"/>
 <path d="M1000.3 763.5 Q1002.2 766 1004.1 763.5 Z" fill="#ffffff"/>
</svg>
<div class="a st" style="left:31px">0</div>
<div class="a st" style="left:58px">0</div>
<div class="a st" style="left:97px;transform:scaleX(0.967);transform-origin:0 0">Installing packages...</div>
<div class="a st" style="left:662px;transform:scaleX(0.967);transform-origin:0 0">Ln 71, Col 10</div>
<div class="a st" style="left:746px;transform:scaleX(0.904);transform-origin:0 0">Spaces: 4</div>
<div class="a st" style="left:809px;transform:scaleX(0.95);transform-origin:0 0">UTF-8</div>
<div class="a st" style="left:856px;transform:scaleX(0.841);transform-origin:0 0">CRLF</div>
<div class="a st" style="left:897px;transform:scaleX(0.923);transform-origin:0 0">JavaScript</div>

</body></html>
